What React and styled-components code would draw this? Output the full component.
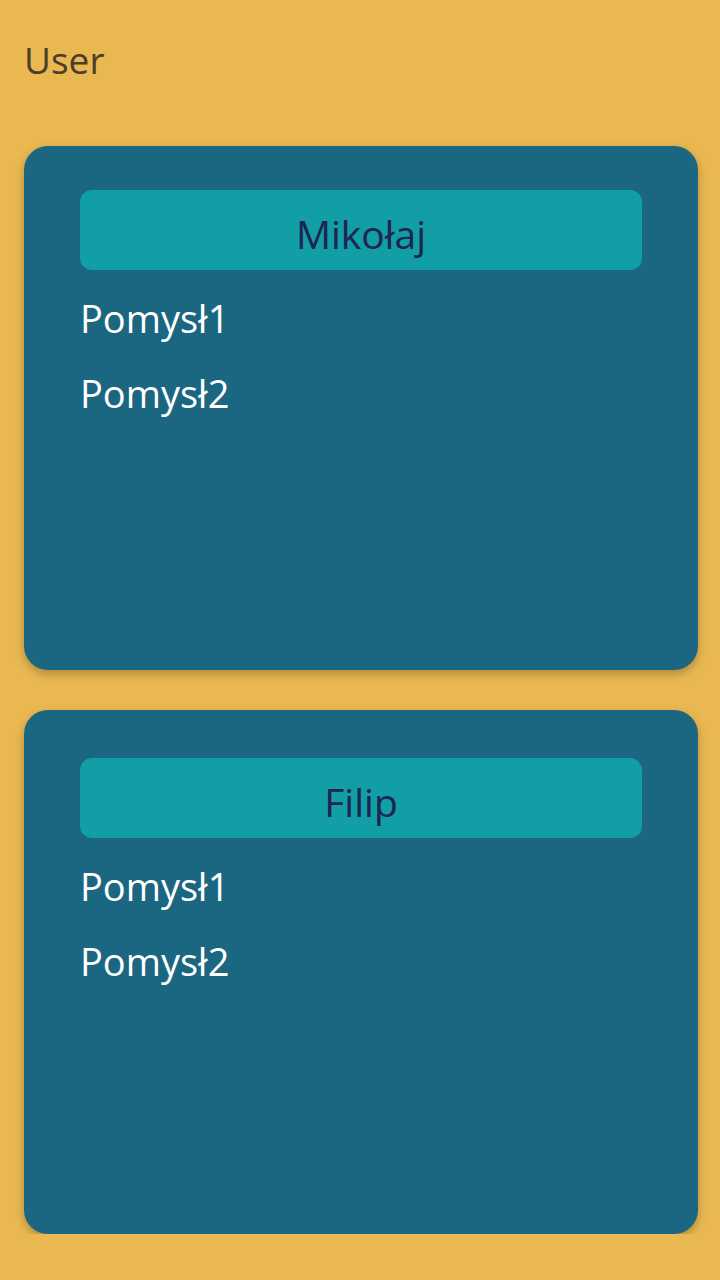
import React from 'react';
import styled, { createGlobalStyle } from 'styled-components';

const GlobalStyle = createGlobalStyle`
  body {
    margin: 0;
    background: #e9b851;
    font-family: 'Open Sans', 'Noto Sans', sans-serif;
  }
`;

const Page = styled.div`
  padding: 0 22px 0 24px;
`;

const Title = styled.h1`
  margin: 36px 0 0 0;
  font-size: 37px;
  line-height: 48px;
  font-weight: 400;
  color: #4c3d2b;
`;

const CardList = styled.div`
  display: flex;
  flex-direction: column;
  gap: 40px;
  margin-top: 62px;
`;

const Card = styled.div`
  box-sizing: border-box;
  height: 524px;
  background: #1b6680;
  border-radius: 24px;
  padding: ${props => props.top}px 56px 0 56px;
  box-shadow: 0 4px 10px rgba(0, 0, 0, 0.25);
`;

const NameTag = styled.div`
  box-sizing: border-box;
  height: 80px;
  padding-top: 6px;
  display: flex;
  align-items: center;
  justify-content: center;
  background: #119ea5;
  border-radius: 12px;
  font-size: 39px;
  color: #1f2451;
  margin-bottom: 11px;
`;

const Idea = styled.div`
  font-size: 38px;
  line-height: 75px;
  color: #ffffff;
`;

const users = [
  { name: 'Mikołaj', top: 44, ideas: ['Pomysł1', 'Pomysł2'] },
  { name: 'Filip', top: 48, ideas: ['Pomysł1', 'Pomysł2'] },
];

export default function App() {
  return (
    <Page>
      <GlobalStyle />
      <Title>User</Title>
      <CardList>
        {users.map(user => (
          <Card key={user.name} top={user.top}>
            <NameTag>{user.name}</NameTag>
            {user.ideas.map(idea => (
              <Idea key={idea}>{idea}</Idea>
            ))}
          </Card>
        ))}
      </CardList>
    </Page>
  );
}
